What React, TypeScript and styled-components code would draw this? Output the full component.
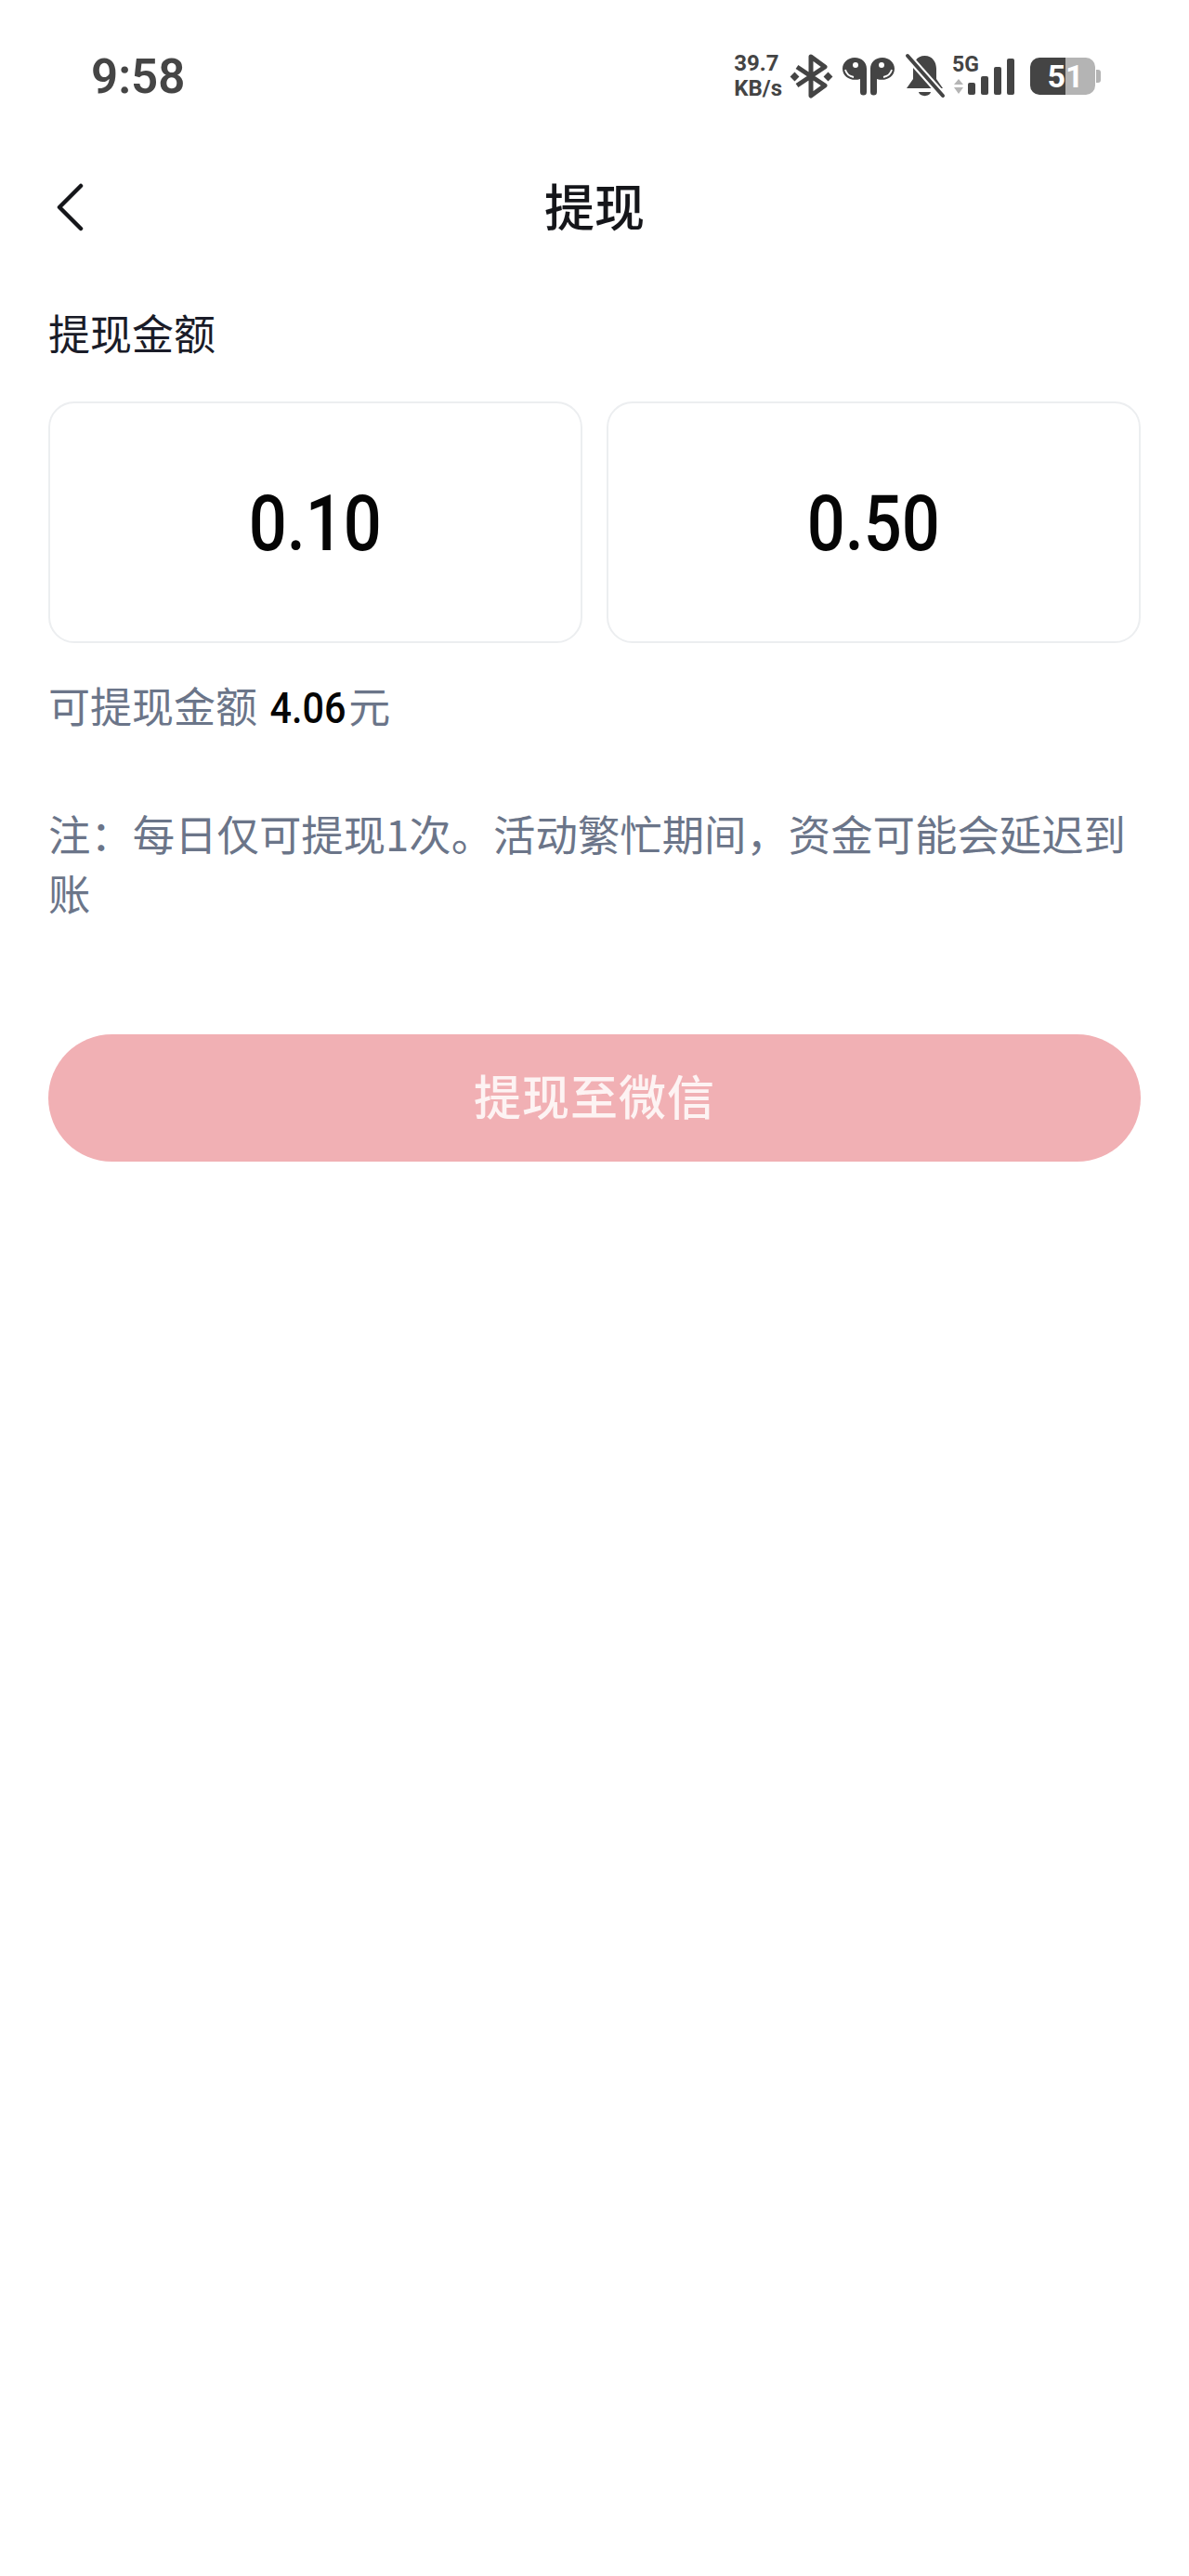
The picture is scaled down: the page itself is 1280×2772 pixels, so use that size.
import React from "react";
import styled, { createGlobalStyle } from "styled-components";

const Global = createGlobalStyle`
  html, body { margin: 0; padding: 0; background: #fff; }
  body { font-family: "Noto Sans CJK SC", "Noto Sans", sans-serif; }
`;

const Page = styled.div`
  width: 1280px;
  height: 2772px;
  background: #fff;
  overflow: hidden;
  display: flex;
  flex-direction: column;
`;

const StatusBar = styled.div`
  height: 164px;
  display: flex;
  align-items: center;
  justify-content: space-between;
  padding: 0 95px 0 98px;
  box-sizing: border-box;
  color: #444;
`;

const Time = styled.div`
  font-family: Roboto, sans-serif;
  font-size: 51px;
  font-weight: 600;
  line-height: 1;
  color: #454545;
`;

const Indicators = styled.div`
  display: flex;
  align-items: center;
`;

const Speed = styled.div`
  font-family: Roboto, sans-serif;
  font-size: 24px;
  font-weight: 700;
  line-height: 27px;
  color: #444;
  margin-right: 10px;
`;

const Icon = styled.svg<{ $gap?: number }>`
  display: block;
  flex: none;
  overflow: visible;
  margin-right: ${(p) => p.$gap ?? 0}px;
`;

const Header = styled.div`
  height: 124px;
  margin-top: -5px;
  display: grid;
  grid-template-columns: 1fr auto 1fr;
  align-items: center;
  padding: 0 52px;
`;

const BackButton = styled.div`
  display: flex;
  align-items: center;
  padding: 3px 0 0 8px;
`;

const Title = styled.div`
  font-size: 54px;
  font-weight: 500;
  line-height: 1;
  color: #15161a;
`;

const Content = styled.div`
  padding: 0 52px;
  display: flex;
  flex-direction: column;
`;

const SectionLabel = styled.div`
  margin-top: 45px;
  font-size: 45px;
  line-height: 60px;
  color: #1a1c28;
`;

const Amounts = styled.div`
  margin-top: 44px;
  display: grid;
  grid-template-columns: 1fr 1fr;
  gap: 26px;
`;

const AmountCard = styled.div`
  height: 260px;
  box-sizing: border-box;
  padding-top: 4px;
  border: 2px solid #eceef0;
  border-radius: 28px;
  display: flex;
  align-items: center;
  justify-content: center;
`;

const AmountValue = styled.span`
  font-family: Roboto, sans-serif;
  font-size: 84px;
  font-weight: 500;
  line-height: 1;
  color: #050505;
  display: inline-block;
  transform: scaleX(0.86);
`;

const Balance = styled.div`
  margin-top: 37px;
  font-size: 45px;
  line-height: 60px;
  color: #6b7589;
`;

const BalanceValue = styled.span`
  font-family: Roboto, sans-serif;
  font-weight: 500;
  font-size: 47px;
  color: #050505;
  display: inline-block;
  margin: 0 -3px 0 8px;
  transform: scaleX(0.88);
`;

const Note = styled.div`
  margin-top: 72px;
  font-size: 45.4px;
  line-height: 64px;
  color: #6b7589;
`;

const SubmitButton = styled.div`
  margin-top: 121px;
  height: 137px;
  box-sizing: border-box;
  padding-bottom: 8px;
  border-radius: 69px;
  background: #f1b0b4;
  color: #fdf3f3;
  font-size: 51px;
  font-weight: 500;
  letter-spacing: 1px;
  display: flex;
  align-items: center;
  justify-content: center;
`;

const Fill = "#444";

export default function App() {
  return (
    <Page lang="zh-CN">
      <Global />
      <StatusBar>
        <Time>9:58</Time>
        <Indicators>
          <Speed>
            39.7
            <br />
            KB/s
          </Speed>
          <Icon $gap={11} width="44" height="48" viewBox="0 0 44 48">
            <path d="M6 14 L36 34 L21 45 V3 L36 14 L6 34" fill="none" stroke={Fill} strokeWidth="5" strokeLinejoin="round" />
            <rect x="0" y="21" width="7" height="7" transform="rotate(45 3.5 24.5)" fill={Fill} />
            <rect x="36" y="21" width="7" height="7" transform="rotate(45 39.5 24.5)" fill={Fill} />
          </Icon>
          <Icon $gap={11} width="56" height="42" viewBox="0 0 56 42">
            <path d="M13 1 C21 1 26 6 26 13 V38 a3.5 3.5 0 0 1 -7 0 V24 C10 27 0 22 0 13 C0 6 6 1 13 1 Z" fill={Fill} />
            <path d="M43 1 C35 1 30 6 30 13 V38 a3.5 3.5 0 0 0 7 0 V24 C46 27 56 22 56 13 C56 6 50 1 43 1 Z" fill={Fill} />
            <circle cx="14" cy="9" r="3" fill="#fff" />
            <circle cx="42" cy="9" r="3" fill="#fff" />
            <path d="M3 14 C4 18 7 21 12 22" stroke="#fff" strokeWidth="1.8" fill="none" />
            <path d="M53 14 C52 18 49 21 44 22" stroke="#fff" strokeWidth="1.8" fill="none" />
          </Icon>
          <Icon $gap={7} width="44" height="48" viewBox="0 0 44 48">
            <path d="M21.5 2 C30 2 34 9 34 16 V27 L41 37 H2 L9 27 V16 C9 9 13 2 21.5 2 Z" fill={Fill} />
            <path d="M15 41 H28 C27 46.5 16 46.5 15 41 Z" fill={Fill} />
            <path d="M2 1 L41 45" stroke="#fff" strokeWidth="8" />
            <path d="M3 2 L41 45" stroke={Fill} strokeWidth="4" strokeLinecap="round" />
          </Icon>
          <Icon $gap={16} width="68" height="44" viewBox="0 0 68 44">
            <text x="0" y="17" fontFamily="Roboto, sans-serif" fontWeight="700" fontSize="23" fill={Fill}>5G</text>
            <path d="M7 25 L12 31 H2 Z M2 34 H12 L7 41 Z" fill="#b5b5b5" />
            <rect x="17" y="29" width="8" height="13" rx="2" fill={Fill} />
            <rect x="31" y="22" width="8" height="20" rx="2" fill={Fill} />
            <rect x="45" y="12" width="8" height="30" rx="2" fill={Fill} />
            <rect x="59" y="3" width="8" height="39" rx="2" fill={Fill} />
          </Icon>
          <Icon width="76" height="40" viewBox="0 0 76 40">
            <path d="M38 0 H60 a10 10 0 0 1 10 10 V30 a10 10 0 0 1 -10 10 H38 Z" fill="#b4b4b4" />
            <path d="M71 13 h2 a3 3 0 0 1 3 3 v8 a3 3 0 0 1 -3 3 h-2 Z" fill="#b4b4b4" />
            <path d="M38 0 H10 a10 10 0 0 0 -10 10 V30 a10 10 0 0 0 10 10 H38 Z" fill={Fill} />
            <text x="38" y="32" textAnchor="middle" fontFamily="Roboto, sans-serif" fontWeight="700" fontSize="34" fill="#fff">51</text>
          </Icon>
        </Indicators>
      </StatusBar>
      <Header>
        <BackButton>
          <svg width="32" height="52" viewBox="0 0 32 52">
            <path d="M27 3 L4 26 L27 49" fill="none" stroke="#15161a" strokeWidth="4.5" strokeLinecap="round" strokeLinejoin="round" />
          </svg>
        </BackButton>
        <Title>提现</Title>
        <div />
      </Header>
      <Content>
        <SectionLabel>提现金额</SectionLabel>
        <Amounts>
          <AmountCard>
            <AmountValue>0.10</AmountValue>
          </AmountCard>
          <AmountCard>
            <AmountValue>0.50</AmountValue>
          </AmountCard>
        </Amounts>
        <Balance>
          可提现金额<BalanceValue>4.06</BalanceValue>元
        </Balance>
        <Note>注：每日仅可提现1次。活动繁忙期间，资金可能会延迟到账</Note>
        <SubmitButton>提现至微信</SubmitButton>
      </Content>
    </Page>
  );
}
